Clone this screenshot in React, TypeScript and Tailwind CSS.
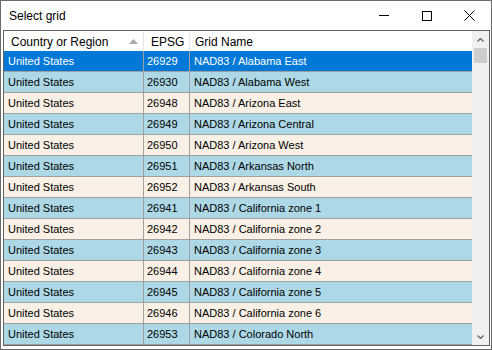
const rows = [
  ["26929", "NAD83 / Alabama East"],
  ["26930", "NAD83 / Alabama West"],
  ["26948", "NAD83 / Arizona East"],
  ["26949", "NAD83 / Arizona Central"],
  ["26950", "NAD83 / Arizona West"],
  ["26951", "NAD83 / Arkansas North"],
  ["26952", "NAD83 / Arkansas South"],
  ["26941", "NAD83 / California zone 1"],
  ["26942", "NAD83 / California zone 2"],
  ["26943", "NAD83 / California zone 3"],
  ["26944", "NAD83 / California zone 4"],
  ["26945", "NAD83 / California zone 5"],
  ["26946", "NAD83 / California zone 6"],
  ["26953", "NAD83 / Colorado North"],
]

export default function App() {
  return (
    <div className="w-[492px] h-[350px] border border-[#6b6b6b] bg-white flex flex-col overflow-hidden font-['Liberation_Sans',Arial,sans-serif]">
      {/* Title bar */}
      <div className="h-[29px] flex items-center shrink-0">
        <span className="pl-[8px] text-[12px] text-black">Select grid</span>
        <div className="ml-auto flex items-center h-full">
          <div className="w-[43px] h-full flex items-center justify-center">
            <div className="w-[10px] h-px bg-black" />
          </div>
          <div className="w-[43px] h-full flex items-center justify-center">
            <div className="w-[10px] h-[10px] border border-black" />
          </div>
          <div className="w-[43px] h-full flex items-center justify-center">
            <svg width="11" height="11" viewBox="0 0 11 11">
              <path d="M0.5 0.5 L10.5 10.5 M10.5 0.5 L0.5 10.5" stroke="black" strokeWidth="1" />
            </svg>
          </div>
        </div>
      </div>

      {/* Grid */}
      <div className="ml-[2px] mr-[1px] h-[316px] border border-[#646464] flex overflow-hidden">
        <div className="flex-1 flex flex-col text-[11px]">
          <div className="h-[20px] flex shrink-0 bg-white text-[12px] text-black pt-px">
            <div className="w-[140px] flex items-center pl-[7px] pr-[5px] border-r border-[#e5e5e5]">
              <span>Country or Region</span>
              <svg className="ml-auto" width="9" height="5" viewBox="0 0 9 5">
                <path d="M0 5 L4.5 0 L9 5 Z" fill="#a8a8a8" />
              </svg>
            </div>
            <div className="w-[46px] flex items-center pl-[7px] border-r border-[#e5e5e5]">EPSG</div>
            <div className="flex-1 flex items-center pl-[5px]">Grid Name</div>
          </div>
          {rows.map(([code, name], i) => {
            const bg = i === 0 ? "bg-[#0078d7] text-white" : i % 2 === 1 ? "bg-[#add8e6] text-black" : "bg-[#faf0e6] text-black"
            return (
              <div key={code} className={`h-[21px] flex shrink-0 border-b border-[#a0a0a0] ${bg}`}>
                <div className="w-[140px] flex items-center pl-[4px] border-r border-[#a0a0a0]">United States</div>
                <div className="w-[46px] flex items-center pl-[3px] border-r border-[#a0a0a0]">{code}</div>
                <div className="flex-1 flex items-center pl-[4px]">{name}</div>
              </div>
            )
          })}
        </div>

        {/* Scrollbar */}
        <div className="w-[17px] bg-[#f0f0f0] flex flex-col shrink-0">
          <div className="h-[17px] flex items-center justify-center">
            <svg width="7" height="4" viewBox="0 0 7 4">
              <path d="M0.5 3.5 L3.5 0.5 L6.5 3.5" stroke="#606060" strokeWidth="1.2" fill="none" />
            </svg>
          </div>
          <div className="mx-[2px] h-[15px] bg-[#cdcdcd]" />
          <div className="flex-1" />
          <div className="h-[17px] flex items-center justify-center">
            <svg width="7" height="4" viewBox="0 0 7 4">
              <path d="M0.5 0.5 L3.5 3.5 L6.5 0.5" stroke="#606060" strokeWidth="1.2" fill="none" />
            </svg>
          </div>
        </div>
      </div>
    </div>
  )
}
